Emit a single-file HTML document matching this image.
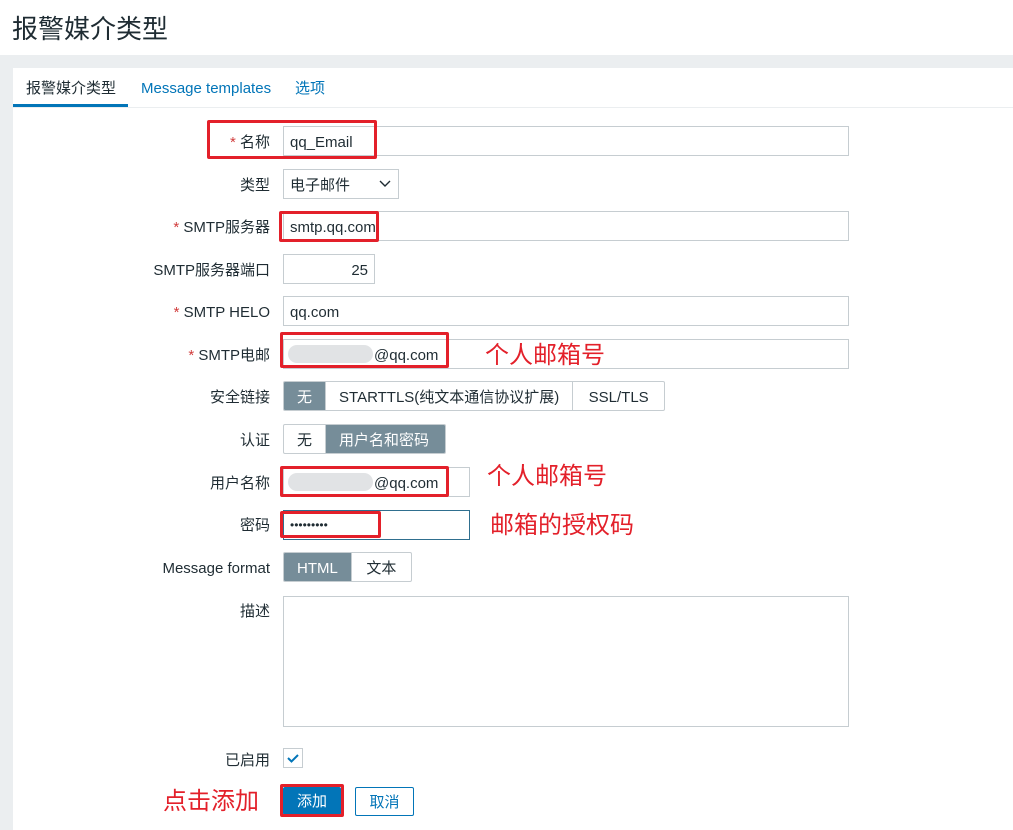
<!DOCTYPE html><html><head><meta charset="utf-8"><style>
*{box-sizing:border-box;margin:0;padding:0}
body{width:1013px;height:830px;overflow:hidden;background:#ebeef0;font-family:"Liberation Sans","Noto Sans CJK SC",sans-serif;font-size:15px;line-height:18px;color:#1f2c33;position:relative}
.a{position:absolute}
.hdr{left:0;top:0;width:1013px;height:55px;background:#fff}
.hdr h1{position:absolute;left:12px;top:14px;font-size:26px;line-height:30px;font-weight:normal;color:#1f2c33}
.panel{left:13px;top:68px;width:1000px;height:762px;background:#fff}
.tabs{left:13px;top:68px;width:1000px;height:40px;border-bottom:1px solid #ebeef0}
.lbl{position:absolute;right:743px;text-align:right;white-space:nowrap;color:#1f2c33;margin-top:2px}
.lbl b{color:#d13c3c;font-weight:normal}
.in{position:absolute;left:283px;height:30px;border:1px solid #c6cdd1;background:#fff;padding:0 6px;line-height:31px;white-space:nowrap}
.seg{position:absolute;left:283px;height:30px;display:flex;border:1px solid #c6cdd1;border-radius:2px;overflow:hidden}
.seg span{padding:0 13px;line-height:31px;border-right:1px solid #c6cdd1;white-space:nowrap}
.seg span:last-child{border-right:none}
.seg .on{background:#768d99;color:#fff}
.red{position:absolute;border:3px solid #e3202a;border-radius:2px}
.note{position:absolute;color:#e3202a;font-size:24px;line-height:28px;white-space:nowrap;margin-top:2px}
.blur{position:absolute;height:18px;background:#e1e3e5;border-radius:9px}
</style></head><body>
<div class="a hdr"><h1>报警媒介类型</h1></div>
<div class="a panel"></div>
<div class="a tabs"></div>
<div class="a" style="left:26px;top:80px">报警媒介类型</div>
<div class="a" style="left:13px;top:104px;width:115px;height:3px;background:#0275b8"></div>
<div class="a" style="left:141px;top:80px;color:#0275b8">Message templates</div>
<div class="a" style="left:295px;top:80px;color:#0275b8">选项</div>

<div class="lbl" style="top:132px"><b>*</b> 名称</div>
<div class="in" style="top:126px;width:566px">qq_Email</div>
<div class="lbl" style="top:175px">类型</div>
<div class="in" style="top:169px;width:116px">电子邮件<svg class="a" style="right:7px;top:10px" width="12" height="8"><path d="M1 1l5 5 5-5" stroke="#1f2c33" stroke-width="1.4" fill="none"/></svg></div>
<div class="lbl" style="top:217px"><b>*</b> SMTP服务器</div>
<div class="in" style="top:211px;width:566px">smtp.qq.com</div>
<div class="lbl" style="top:260px">SMTP服务器端口</div>
<div class="in" style="top:254px;width:92px;text-align:right">25</div>
<div class="lbl" style="top:302px"><b>*</b> SMTP HELO</div>
<div class="in" style="top:296px;width:566px">qq.com</div>
<div class="lbl" style="top:345px"><b>*</b> SMTP电邮</div>
<div class="in" style="top:339px;width:566px"><span style="padding-left:84px">@qq.com</span></div>
<div class="blur" style="left:288px;top:345px;width:85px"></div>
<div class="lbl" style="top:387px">安全链接</div>
<div class="seg" style="top:381px;width:382px"><span class="on">无</span><span>STARTTLS(纯文本通信协议扩展)</span><span style="flex:1;text-align:center">SSL/TLS</span></div>
<div class="lbl" style="top:430px">认证</div>
<div class="seg" style="top:424px;width:163px"><span>无</span><span class="on" style="flex:1">用户名和密码</span></div>
<div class="lbl" style="top:473px">用户名称</div>
<div class="in" style="top:467px;width:187px"><span style="padding-left:84px">@qq.com</span></div>
<div class="blur" style="left:288px;top:473px;width:85px"></div>
<div class="lbl" style="top:515px">密码</div>
<div class="in" style="top:510px;width:187px;border-color:#2f6f8f;font-size:12px;line-height:28px">•••••••••</div>
<div class="lbl" style="top:558px">Message format</div>
<div class="seg" style="top:552px;width:129px"><span class="on">HTML</span><span style="flex:1;text-align:center">文本</span></div>
<div class="lbl" style="top:601px">描述</div>
<div class="in" style="top:596px;width:566px;height:131px"></div>
<div class="lbl" style="top:750px">已启用</div>
<div class="a" style="left:283px;top:748px;width:20px;height:20px;border:1px solid #c6cdd1"><svg width="18" height="18"><path d="M4 9l3.5 3.5L14 6" stroke="#0275b8" stroke-width="2" fill="none"/></svg></div>
<div class="a" style="left:283px;top:787px;width:58px;height:28px;background:#0275b8;color:#fff;text-align:center;line-height:30px;border-radius:2px">添加</div>
<div class="a" style="left:355px;top:787px;width:59px;height:29px;border:1px solid #0275b8;color:#0275b8;text-align:center;line-height:29px;border-radius:2px">取消</div>

<div class="red" style="left:207px;top:120px;width:170px;height:39px"></div>
<div class="red" style="left:279px;top:211px;width:100px;height:31px"></div>
<div class="red" style="left:280px;top:332px;width:169px;height:36px"></div>
<div class="red" style="left:280px;top:466px;width:169px;height:31px"></div>
<div class="red" style="left:280px;top:511px;width:101px;height:27px"></div>
<div class="red" style="left:280px;top:784px;width:64px;height:33px"></div>
<div class="note" style="left:485px;top:340px">个人邮箱号</div>
<div class="note" style="left:487px;top:461px">个人邮箱号</div>
<div class="note" style="left:490px;top:510px">邮箱的授权码</div>
<div class="note" style="left:163px;top:786px">点击添加</div>
</body></html>
